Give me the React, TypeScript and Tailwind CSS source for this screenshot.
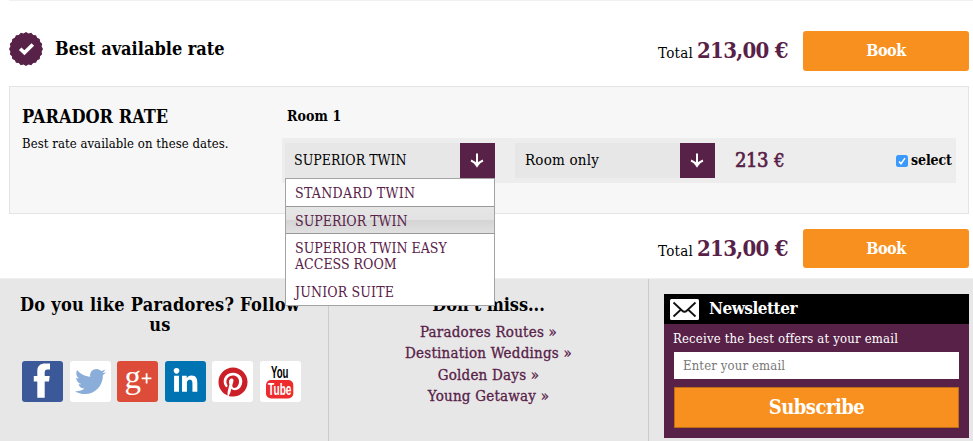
import React from "react";
import { FaTwitter, FaLinkedinIn, FaPinterest } from "react-icons/fa";

function Arrow() {
  return (
    <span className="flex h-[35px] w-[35px] items-center justify-center bg-[#582148]">
      <svg width="15" height="15" viewBox="0 0 15 15" fill="none" stroke="#fff">
        <path d="M7 0.500v12" strokeWidth="2" />
        <path d="M1 7.500Q4.700 8.800 7 12.600Q9.300 8.800 13 7.500" strokeWidth="2.200" />
      </svg>
    </span>
  );
}

function Seal() {
  const points = Array.from({ length: 40 }, (_, i) => {
    const r = i % 2 ? 15.8 : 17;
    const a = (i * Math.PI) / 20;
    return `${17 + r * Math.cos(a)},${17 + r * Math.sin(a)}`;
  }).join(" ");
  return (
    <svg width="34" height="34" viewBox="0 0 34 34">
      <polygon points={points} fill="#582148" />
      <path d="M11.200 16.800l4.200 4 8.400-8.400" fill="none" stroke="#fff" strokeWidth="3.600" />
    </svg>
  );
}

function Total({ tall }: { tall: boolean }) {
  return (
    <div className="flex items-center">
      <div className={`flex w-[145px] items-baseline whitespace-nowrap ${tall ? "" : "pt-px"}`}>
        <span className="w-[39px] text-[15px] leading-10 tracking-[0.3px] text-black">Total</span>
        <span className="text-[22px] leading-10 font-bold tracking-[-0.7px] text-[#582148]">213,00 €</span>
      </div>
      <button className={`w-[166px] rounded-[3px] bg-[#f7901e] text-[16px] font-bold tracking-[-0.4px] text-white ${tall ? "h-10" : "h-[39px]"}`}>
        Book
      </button>
    </div>
  );
}

const tile = "flex h-[41px] w-[41px] items-center justify-center rounded-[3px]";

export default function App() {
  return (
    <div className="h-[441px] w-[973px] overflow-hidden bg-white font-['DejaVu_Serif_Condensed','DejaVu_Serif',serif] text-black">
      <div className="ml-[9px] w-[964px] border-t border-[#f0f0f0] pt-[30px]">
        <div className="flex h-10 w-[960px] items-center justify-between">
          <div className="flex items-center">
            <div className="w-[46px] pb-[5px]"><Seal /></div>
            <h2 className="pb-[5px] text-[18px] font-bold">Best available rate</h2>
          </div>
          <Total tall />
        </div>
      </div>

      <section className="mt-[15px] ml-[9px] flex h-32 w-[960px] border border-[#e4e4e4] bg-[#f7f7f7]">
        <div className="w-[272px] pt-[18px] pl-3 whitespace-nowrap">
          <h3 className="text-[18px] leading-6 font-bold">PARADOR RATE</h3>
          <p className="mt-[5px] text-[13px] leading-5 tracking-[0.06px]">Best rate available on these dates.</p>
        </div>
        <div className="pt-[19px]">
          <h4 className="pl-[5px] text-[14px] leading-5 font-bold tracking-[0.1px]">Room 1</h4>
          <div className="mt-3 flex h-[45px] w-[674px] items-center bg-[#ededed] pl-[3px]">
            <div className="relative flex w-[210px] items-center justify-between bg-[#e7e7e7] pl-[9px]">
              <span className="text-[14px]">SUPERIOR TWIN</span>
              <Arrow />
              <ul className="absolute top-[35px] left-0 h-32 w-[210px] border border-[#a3a3a3] bg-white text-[14px] leading-4 text-[#582148]">
                <li className="h-[27px] pt-[6px] pl-[9px] tracking-[0.3px]">STANDARD TWIN</li>
                <li className="h-7 border-y border-[#999] bg-[linear-gradient(#e6e6e6_0%,#e2e2e2_50%,#d4d4d4_50%,#e0e0e0_100%)] pt-[6px] pl-[9px]">SUPERIOR TWIN</li>
                <li className="h-11 w-[190px] pt-[6px] pl-[9px]">SUPERIOR TWIN EASY ACCESS ROOM</li>
                <li className="pt-[6px] pl-[9px] tracking-[0.15px]">JUNIOR SUITE</li>
              </ul>
            </div>
            <div className="ml-5 flex w-[200px] items-center justify-between bg-[#e7e7e7] pl-[10px]">
              <span className="text-[15px] tracking-[0.2px]">Room only</span>
              <Arrow />
            </div>
            <div className="ml-5 w-[161px] pb-px whitespace-nowrap text-[#582148]">
              <span className="text-[20px] tracking-[-0.4px] [-webkit-text-stroke:0.7px_#582148]">213</span>
              <span className="ml-[6px] text-[18px] [-webkit-text-stroke:0.6px_#582148]">€</span>
            </div>
            <label className="flex items-center text-[14px] font-bold tracking-[-0.1px]">
              <svg className="mr-[3px]" width="12" height="12" viewBox="0 0 12 12">
                <rect width="12" height="12" rx="2.5" fill="#3b99fc" />
                <path d="M3 6.4l2 2.3 4-5.6" fill="none" stroke="#fff" strokeWidth="1.5" />
              </svg>
              select
            </label>
          </div>
        </div>
      </section>

      <div className="mt-[15px] ml-[9px] flex h-[39px] w-[960px] items-center justify-end">
        <Total tall={false} />
      </div>

      <footer className="mt-[10px] flex h-[163px] border-t border-[#efefef] bg-[#e7e7e7]">
        <section className="w-[329px] border-r border-[#ccc] pt-[16px]">
          <h2 className="w-[320px] text-center text-[18px] leading-[19.5px] font-bold tracking-[0.27px]">Do you like Paradores? Follow<br />us</h2>
          <div className="mt-[27px] flex w-[301px] justify-between pl-[22px]">
            <span className={`${tile} bg-[#3b5998] text-white`}>
              <svg width="41" height="41" viewBox="0 0 41 41"><path d="M28 2.500h-4.500c-5.500 0-8.200 2.500-8.200 7.500v5h-3.500v5.500h3.500v16.300h7.400V20.500h4.300l.7-5.500h-5v-3.500c0-2 .8-3 2.700-3H28z" fill="#fff" /></svg>
            </span>
            <span className={`${tile} bg-white text-[#8aadd9]`}><FaTwitter size={31} /></span>
            <span className={`${tile} bg-[#dd4b39]`}>
              <svg className="overflow-visible" width="41" height="41" viewBox="0 0 41 41" fill="#fff"><text x="7.500" y="27" fontSize="33" fontFamily="Liberation Serif">g</text><path d="M24.700 16.500h4v-4.300h1.800v4.300h3.900v1.800h-3.900v4.300h-1.800v-4.300h-4z" /></svg>
            </span>
            <span className={`${tile} bg-[#0073b2] pb-px text-white`}><FaLinkedinIn size={27} /></span>
            <span className={`${tile} bg-white text-[#cb2027]`}><FaPinterest size={30} /></span>
            <span className={`${tile} bg-white`}>
              <svg className="overflow-visible" width="41" height="41" viewBox="0 0 41 41" fontFamily="Liberation Sans Narrow, Liberation Sans" fontWeight="700">
                <text x="11" y="17" fontSize="17" textLength="17.500" lengthAdjust="spacingAndGlyphs">You</text>
                <rect x="6" y="19" width="27.300" height="18.500" rx="5" fill="#ee2b2c" />
                <text x="8" y="34.300" fontSize="16.500" textLength="23.500" lengthAdjust="spacingAndGlyphs" fill="#fff">Tube</text>
              </svg>
            </span>
          </div>
        </section>
        <section className="w-80 border-r border-[#ccc] pt-4 text-center">
          <h2 className="text-[18px] leading-[19.5px] font-bold tracking-[-0.05px]">Don't miss...</h2>
          <ul className="mt-[7px] text-[15px] leading-[21.5px] tracking-[0.22px] text-[#582148] [-webkit-text-stroke:0.3px_#582148]">
            <li>Paradores Routes »</li>
            <li>Destination Weddings »</li>
            <li>Golden Days »</li>
            <li>Young Getaway »</li>
          </ul>
        </section>
        <section className="mt-[15px] ml-[15px] h-36 w-[305px] bg-[#582148] text-white">
          <h2 className="flex h-[30px] items-center bg-black pl-[6px] text-[17px] font-bold tracking-[-0.5px]">
            <svg className="mr-[10px]" width="29" height="21" viewBox="0 0 29 21">
              <rect width="29" height="21" rx="1.500" fill="#fff" />
              <path d="M3.500 3.500L12 11.500Q14.500 14 17 11.500L25.500 3.500M3.500 17.500l7.500-7M25.500 17.500l-7.500-7" fill="none" stroke="#111" strokeWidth="1.800" />
            </svg>
            Newsletter
          </h2>
          <p className="pt-[5px] pl-[9px] text-[13px] leading-5 tracking-[0.19px] whitespace-nowrap">Receive the best offers at your email</p>
          <input className="mt-[3px] ml-[10px] block h-[27px] w-[285px] bg-white pl-[9px] text-[13px] tracking-[0.14px] placeholder:text-[#777]" placeholder="Enter your email" />
          <button className="mt-2 ml-[10px] block h-[41px] w-[285px] border border-[#bd6d16] bg-[#f7901e] pb-px text-[20px] font-bold tracking-[-0.5px]">Subscribe</button>
        </section>
      </footer>
    </div>
  );
}
